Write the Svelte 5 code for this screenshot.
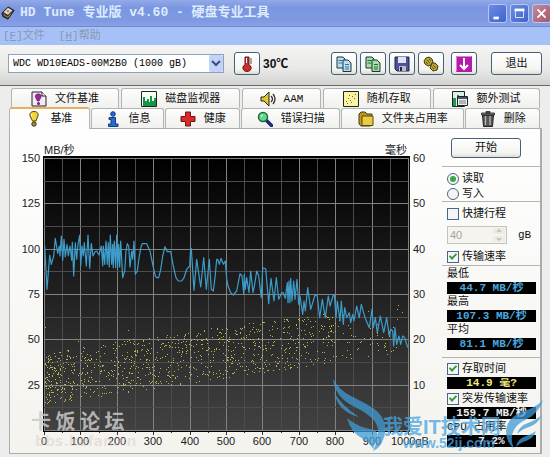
<script>
  const topTabs = [
    { icon: 'filebench', label: '文件基准' },
    { icon: 'monitor', label: '磁盘监视器' },
    { icon: 'speaker', label: 'AAM' },
    { icon: 'random', label: '随机存取' },
    { icon: 'extra', label: '额外测试' },
  ];
  const bottomTabs = [
    { icon: 'bulb', label: '基准' },
    { icon: 'info', label: '信息' },
    { icon: 'health', label: '健康' },
    { icon: 'scan', label: '错误扫描' },
    { icon: 'folder', label: '文件夹占用率' },
    { icon: 'trash', label: '删除' },
  ];
  const tools = [
    { icon: 'copy', label: '复制信息' },
    { icon: 'copygreen', label: '复制截图' },
    { icon: 'save', label: '保存' },
    { icon: 'options', label: '选项' },
    { icon: 'down', label: '最小化' },
  ];

  let active = $state('基准');
  let mode = $state('read');
  let shortStroke = $state(false);
  let showRate = $state(true);
  let showAccess = $state(true);
  let showBurst = $state(true);

  // plot area
  const left = 44;
  const top = 157;
  const stepX = 36.4;
  const stepY = 45.3;
  const bottom = top + stepY * 6;
  const right = left + stepX * 10;
  const columns = Array.from({ length: 21 }, (_, i) => Math.round(left + (i * stepX) / 2));
  const rows = Array.from({ length: 13 }, (_, i) => Math.round(top + (i * stepY) / 2));

  // transfer rate, x/y pairs in thirds of a unit
  const firstHalf = [
    134,345,141,475,149,372,154,400,161,375,166,322,173,367,178,345,180,375,184,315,188,388,192,325,
    196,378,201,340,205,375,210,345,215,388,217,333,221,435,226,335,230,385,234,340,239,312,242,405,
    246,345,250,375,253,335,259,405,264,312,269,412,274,337,279,375,285,362,290,360,297,372,304,345,
    308,405,310,345,314,400,318,330,322,400,325,335,328,408,331,312,335,400,338,340,340,410,343,330,
    347,410,350,312,353,410,356,340,359,408,362,330,368,440,374,420,378,360,382,338,386,345,390,408,
    395,360,398,385,402,330,406,430,412,420,418,375,423,348,427,338,440,338,450,360,458,400,466,435,
    470,440,476,440,482,415,488,375,495,347,502,362,512,362,520,405,528,440,535,450,545,450,552,440,
    560,415,569,405,571,365,574,352,582,478,590,385,602,468,611,380,619,475,628,385,634,475,640,480,
    645,440,650,385,
  ];
  const secondHalf = [
    53,115,58,130,63,112,70,130,76,120,80,175,84,195,
    92,215,100,222,110,210,120,158,126,165,131,218,133,160,136,205,140,170,147,215,152,150,159,215,
    164,190,170,150,176,165,184,230,188,140,197,143,206,248,213,172,222,240,229,170,236,235,245,215,
    250,215,256,232,262,185,264,245,267,180,270,245,272,172,276,240,281,180,285,235,291,175,296,250,
    300,225,308,280,312,240,316,270,323,200,332,265,345,222,352,225,359,290,367,235,376,290,385,225,
    390,255,400,222,403,220,408,290,412,240,416,270,420,300,424,240,430,310,434,260,440,290,448,275,
    452,305,458,280,462,300,470,255,478,290,484,250,495,290,508,320,516,265,520,320,526,290,532,335,
    541,285,551,335,560,290,568,345,572,325,578,330,581,375,585,320,590,370,597,345,602,370,608,345,
    614,350,623,380,
  ];

  function toPoints(list, dx, dy) {
    const out = [];
    for (let i = 0; i < list.length; i += 2) {
      out.push((dx + list[i] / 3).toFixed(1) + ',' + (dy + list[i + 1] / 3).toFixed(1));
    }
    return out.join(' ');
  }
  const ratePoints = toPoints(firstHalf, 0, 130) + ' ' + toPoints(secondHalf, 200, 220);

  // access time dots, fixed seed so the plot is stable
  let seed = 20;
  function rand() {
    seed = (seed * 16807) % 2147483647;
    return seed / 2147483647;
  }
  const dots = [];
  for (let i = 0; i < 1150; i++) {
    const t = Math.pow(rand(), 1.3);
    if (t > 0.82 && rand() > 0.3) continue;
    const hi = 354 - 50 * Math.pow(t, 0.8);
    const lo = 403 - 52 * t;
    let y = hi + (lo - hi) * rand();
    dots.push([Math.round(45 + t * 360), Math.round(y)]);
  }
  dots.push([45, 326], [128, 329], [398, 304], [397, 318], [372, 310], [78, 340]);
  const dotPath = dots.map(([x, y]) => `M${x} ${y}h1v1h-1z`).join('');
</script>

{#snippet icon(name)}
  <svg class="icon" viewBox="0 0 16 16" aria-hidden="true">
    {#if name === 'filebench'}
      <path d="M1 1h10l4 4v10H1z" fill="#f6e8f6" stroke="#222" />
      <path d="M11 1v4h4" fill="#fff" stroke="#222" />
      <path d="M7 3c3 0 4 2 2.500 4L8 10H6.500L5 7C3.500 5 5 3 7 3z" fill="#a426a4" stroke="#401040" stroke-width=".7" />
      <circle cx="7.500" cy="12.500" r="1.500" fill="#702070" />
    {:else if name === 'monitor'}
      <path d="M.5 .5h15v15H.5z" fill="#f4fff2" stroke="#222" />
      <path d="M2 15V6h2v4h2V8h2v3h1V5h2v5h2V7h2v8z" fill="#169447" />
    {:else if name === 'speaker'}
      <path d="M1 6h3l5-5v14l-5-5H1z" fill="#e2c72b" stroke="#222" />
      <path d="M11 5q3 3 0 6M13 3q4 5 0 10" fill="none" stroke="#333" stroke-width="1.300" />
    {:else if name === 'random'}
      <path d="M.5 .5h15v15H.5z" fill="#fbf3a4" stroke="#222" />
      <path d="M3 10h1v1H3zM5 7h1v1H5zM7 9h1v1H7zM9 5h1v1H9zM11 7h1v1h-1zM12 3h1v1h-1zM4 12h1v1H4zM8 11h1v1H8zM6 4h1v1H6z" fill="#75602b" />
    {:else if name === 'extra'}
      <path d="M.5 .5h12v15H.5z" fill="#dceee5" stroke="#222" />
      <path d="M1 15V7h3v8zM5 15V4h2v11z" fill="#1b9a54" />
      <path d="M5.500 5.500h10v9h-10z" fill="#eee" stroke="#222" />
      <path d="M6 6h9v2H6z" fill="#456" />
      <path d="M7 10h7M7 12h7" stroke="#777" />
    {:else if name === 'bulb'}
      <path d="M8 .5c4 0 5 3 3.500 5.500L10 10H6.500L4.500 6C3 3 4.500.5 8 .5z" fill="#f1d735" stroke="#4a4210" />
      <path d="M6 2.500q-1 1 0 3" fill="none" stroke="#fff" />
      <circle cx="8" cy="13" r="2.200" fill="#a69422" stroke="#332" />
    {:else if name === 'info'}
      <circle cx="8" cy="3" r="2.300" fill="#276ad0" stroke="#123d82" />
      <path d="M4 6.500h6.500V13H13v2.500H3.500V13H6V8.500H4z" fill="#276ad0" stroke="#123d82" />
    {:else if name === 'health'}
      <path d="M5.500 1h5v4.500H15v5h-4.500V15h-5v-4.500H1v-5h4.500z" fill="#db2929" stroke="#701616" />
    {:else if name === 'scan'}
      <path d="M9 9l5.500 5.500" stroke="#202b70" stroke-width="3.500" stroke-linecap="round" />
      <circle cx="6" cy="6" r="4.500" fill="#64d78a" stroke="#1b6c3e" stroke-width="1.500" />
      <path d="M4 6q0-2 2-2" fill="none" stroke="#e9fff0" />
    {:else if name === 'folder'}
      <path d="M1 3l2-2h4l2 2h5v11l-2 1H3l-2-2z" fill="#bd981f" stroke="#4b3c10" />
      <path d="M4 5h11v9.500H4z" fill="#eccb42" stroke="#5a4913" />
    {:else if name === 'trash'}
      <path d="M2.500 4h11l-1 11.500h-9z" fill="#555" stroke="#222" />
      <path d="M1.500 2h13v2h-13zM6 .5h4V2H6z" fill="#777" stroke="#222" stroke-width=".8" />
      <path d="M5.500 5v9M10 5v9" stroke="#b9b9b9" stroke-width="1.300" />
    {:else if name === 'copy' || name === 'copygreen'}
      <g fill={name === 'copy' ? '#b9def0' : '#a8dda5'} stroke="#1d3340">
        <path d="M1 1h6l2 2v9H1z" />
        <path d="M7 4h5l3 3v8.500H7z" />
      </g>
      <path d="M2.500 4.500h4M2.500 7h4M9 8.500h4M9 11h4M9 13h4" stroke={name === 'copy' ? '#3377a0' : '#187332'} />
    {:else if name === 'save'}
      <path d="M1 1h14v14H3l-2-2z" fill="#50509a" stroke="#1e1e4e" />
      <path d="M4 1h8v6H4z" fill="#dfe3f3" />
      <path d="M5 10h7v5H5z" fill="#bbc" />
      <path d="M6 11h2v4H6z" fill="#224" />
    {:else if name === 'options'}
      <g fill="#b5a23a" stroke="#45390d">
        <path d="M3 2l3-1 3 2 1 3-2 3-3 1-3-2-1-3z" />
        <path d="M9 7l3 0 3 3-1 4-4 1-3-3z" />
      </g>
      <path d="M4 4l3 3M3 6l2 2M6 3l2 2M10 9l3 3M9 11l2 2" stroke="#6d5d18" />
    {:else if name === 'down'}
      <path d="M0 0h16v16H0z" fill="#b51cab" />
      <path d="M.5 15.500V.5h15" fill="none" stroke="#e77be0" />
      <path d="M8 2v11M4 9l4 4 4-4" fill="none" stroke="#fff" stroke-width="2" />
    {:else if name === 'temp'}
      <path d="M6 1h4v8q3 1 2 4-1 2.500-4 2.500T4 13q-1-3 2-4z" fill="#d22b2b" stroke="#5c1a1a" />
      <path d="M7 2h1v5H7z" fill="#fff" />
      <path d="M11 3h2M11 5h2M11 7h2" stroke="#555" />
    {:else if name === 'disk'}
      <path d="M1 8l7-7 7 4-7 10-6-3z" fill="#3a3632" stroke="#1d1b1a" />
      <path d="M3 7l5-5 5 3-5 5z" fill="#e4dccb" />
      <circle cx="8" cy="6" r="1.500" fill="#a88b5a" />
      <path d="M3 10l5 3 3-4" fill="none" stroke="#c88c3c" />
    {/if}
  </svg>
{/snippet}

<div class="window">
  <header class="titlebar">
    {@render icon('disk')}
    <h1>HD Tune 专业版 v4.60 - 硬盘专业工具</h1>
    <div class="controls">
      <button aria-label="最小化"><svg viewBox="0 0 19 19"><path d="M5 13h6v3H5z" fill="#fff" /></svg></button>
      <button aria-label="最大化"><svg viewBox="0 0 19 19"><path d="M5 5h9v9H5z" fill="none" stroke="#e8efff" /><path d="M4 4h11v3H4z" fill="#fff" /></svg></button>
      <button class="close" aria-label="关闭"><svg viewBox="0 0 19 19"><path d="M5 5l9 9M14 5l-9 9" stroke="#fff" stroke-width="2" /></svg></button>
    </div>
  </header>

  <nav class="menu">
    <button>[<u>F</u>]文件</button>
    <button>[<u>H</u>]帮助</button>
  </nav>

  <div class="toolbar">
    <div class="drive">
      <select aria-label="硬盘">
        <option>WDC WD10EADS-00M2B0 (1000 gB)</option>
      </select>
      <span class="arrow"><svg viewBox="0 0 14 16"><path d="M3 6l4 4 4-4" fill="none" stroke="#34507f" stroke-width="2" /></svg></span>
    </div>
    <button class="btn tool" aria-label="温度">{@render icon('temp')}</button>
    <span class="temp">30℃</span>
    <div class="tools">
      {#each tools as tool}
        <button class="btn tool" aria-label={tool.label}>{@render icon(tool.icon)}</button>
      {/each}
    </div>
    <button class="btn exit">退出</button>
  </div>

  <main>
    <div class="tabs top">
      {#each topTabs as tab}
        <button class:active={active === tab.label} onclick={() => (active = tab.label)}>{@render icon(tab.icon)}{tab.label}</button>
      {/each}
    </div>
    <div class="tabs second">
      {#each bottomTabs as tab}
        <button class:active={active === tab.label} onclick={() => (active = tab.label)}>{@render icon(tab.icon)}{tab.label}</button>
      {/each}
    </div>

    <div class="panel">
      <svg class="chart" viewBox="10 128 432 324" role="img" aria-label="基准">
        <defs>
          <linearGradient id="plot" x1="0" y1="0" x2="0" y2="1">
            <stop offset="0" stop-color="#000" />
            <stop offset="1" stop-color="#424242" />
          </linearGradient>
        </defs>
        <rect x="43" y="155" width="367" height="276" fill="url(#plot)" />
        <g shape-rendering="crispEdges">
          {#each columns as x, i}
            <path d="M{x + 0.5} {top}V{bottom}" stroke={i % 2 ? '#4c4c4c' : '#828282'} />
            <path d="M{x + 0.5} 431v{i % 2 ? 1 : 3}" stroke="#333" />
          {/each}
          {#each rows as y, i}
            <path d="M{left} {y + 0.5}H{right}" stroke={i % 2 ? '#4c4c4c' : '#828282'} />
          {/each}
          <path d="M43 155.500H410M43 430.500H410M43.500 155V431" stroke="#000" />
        </g>
        {#if showAccess}
          <path d={dotPath} fill="#d6ca54" opacity=".85" shape-rendering="crispEdges" />
        {/if}
        {#if showRate}
          <polyline points={ratePoints} fill="none" stroke="#3d9cc9" stroke-width="1.200" stroke-linejoin="round" />
        {/if}
        <g class="axis">
          <text x="44" y="153">MB/秒</text>
          <text x="407" y="153" text-anchor="end">毫秒</text>
          {#each [150, 125, 100, 75, 50, 25] as value, i}
            <text x="40" y={Math.round(top + i * stepY) + 4} text-anchor="end">{value}</text>
          {/each}
          {#each [60, 50, 40, 30, 20, 10] as value, i}
            <text x="413" y={Math.round(top + i * stepY) + 4}>{value}</text>
          {/each}
          {#each [0, 100, 200, 300, 400, 500, 600, 700, 800, 900] as value, i}
            <text x={Math.round(left + i * stepX)} y="444" text-anchor="middle">{value}</text>
          {/each}
          <text x="391" y="444">1000gB</text>
        </g>
        <g class="forum">
          <text class="name" x="31" y="428">卡 饭 论 坛</text>
          <text class="site" x="35" y="445">bbs.kafan.cn</text>
        </g>
      </svg>

      <aside>
        <section class="run">
          <button class="btn start">开始</button>
        </section>
        <section class="modes">
          <label><input type="radio" value="read" bind:group={mode} />读取</label>
          <label><input type="radio" value="write" bind:group={mode} />写入</label>
        </section>
        <section class="stroke">
          <label><input type="checkbox" bind:checked={shortStroke} />快捷行程</label>
          <div class="size">
            <div class="spin">
              <input id="size" type="number" value="40" disabled={!shortStroke} />
              <svg viewBox="0 0 12 14" aria-hidden="true"><path d="M0 0h12v6H0zM0 8h12v6H0z" fill="#ecebe6" /><path d="M4 4l2-2 2 2M4 10l2 2 2-2" fill="none" stroke="#c0beb4" stroke-width="1.500" /></svg>
            </div>
            <label for="size">gB</label>
          </div>
          <label><input type="checkbox" bind:checked={showRate} />传输速率</label>
        </section>
        <section class="rates">
          <p>最低</p>
          <output>44.7 MB/秒</output>
          <p>最高</p>
          <output>107.3 MB/秒</output>
          <p>平均</p>
          <output>81.1 MB/秒</output>
        </section>
        <section class="access">
          <label><input type="checkbox" bind:checked={showAccess} />存取时间</label>
          <output class="yellow">14.9 毫?</output>
          <label class="burst"><input type="checkbox" bind:checked={showBurst} />突发传输速率</label>
          <output class="white">159.7 MB/秒</output>
          <p>CPU 占用率</p>
          <output class="white">7.2%</output>
        </section>
      </aside>
    </div>
  </main>

  <svg class="brand" viewBox="330 370 220 87" aria-hidden="true">
    <g fill="#3f9bd6">
      <path d="M333 379q6 11 18 17 14 7 22 12 10 7 12 17 1 9-2 15-3 8-10 11 6-13 5-22-2-9-10-14-5-4-15-9-18-9-20-27z" />
      <path d="M334 392q7 13 25 25-21-5-25-25z" />
      <path d="M347 418q10 9 27 12 3 1 4 5-3 8-5 14-4-7-10-10-12-6-16-21z" />
      <path d="M543 400q-8 8-19 11-17 6-18 20 0 11 8 18-4-10-1-17 3-8 14-13 12-6 16-19z" />
      <path d="M541 416q-5 4-13 7-9 3-11 11 5-5 12-7 9-3 12-11z" />
      <path d="M536 431q-4 3-10 5-9 3-10 11 5-5 10-6 8-3 10-10z" />
    </g>
    <text class="big" x="383" y="434">我爱IT技术网</text>
    <text class="url" x="403" y="448">www.52ij.com</text>
  </svg>
</div>

<style>
  :global(body) {
    margin: 0;
    background: #eeeeec;
  }

  .window {
    position: relative;
    overflow: hidden;
    background: #ededec;
    color: #111;
    font: 11px/14px "Liberation Mono", "Noto Sans CJK SC", monospace;
    padding-bottom: 3px;
  }

  button, input, select {
    font: inherit;
    color: inherit;
    margin: 0;
    padding: 0;
    box-sizing: border-box;
  }

  svg {
    display: block;
  }

  .icon {
    width: 16px;
    height: 16px;
    flex: none;
  }

  .titlebar {
    display: flex;
    align-items: center;
    height: 27px;
    box-sizing: border-box;
    border-bottom: 1px solid #7088cc;
    background: linear-gradient(#93aae8, #7b96e0 30%, #7f9ae3 80%, #8aa2e4);
  }

  .titlebar .icon {
    width: 14px;
    height: 14px;
    margin: 0 5px 0 1px;
  }

  h1 {
    margin: 0;
    flex: 1;
    white-space: nowrap;
    color: #dcecff;
    font-size: 13px;
    line-height: 20px;
  }

  .controls {
    display: flex;
    gap: 3px;
    margin-right: -1px;
  }

  .controls button {
    width: 19px;
    height: 19px;
    border: 1px solid #b7c8f4;
    border-radius: 3px;
    background: linear-gradient(135deg, #6c8ce4, #3f63c9);
  }

  .controls .close {
    background: linear-gradient(135deg, #c08a9e, #a9586a);
  }

  .menu {
    display: flex;
    gap: 14px;
    height: 18px;
    padding-left: 3px;
    background: #a6c1f8;
  }

  .menu button {
    border: 0;
    background: none;
    color: #8b97b3;
  }

  .toolbar {
    display: flex;
    align-items: center;
    height: 41px;
    box-sizing: border-box;
    padding: 0 8px 3px;
    border-bottom: 1px solid #6a6a6a;
    background: linear-gradient(#f4f4f3, #e9e9e8 60%, #d2d2d0);
  }

  .drive {
    position: relative;
    flex: 0 1 216px;
    margin-right: 10px;
  }

  select {
    appearance: none;
    display: block;
    width: 100%;
    height: 19px;
    padding-left: 4px;
    border: 1px solid #8ea3bd;
    border-radius: 0;
    background: #fff;
    font-size: 10px;
    color: #000;
  }

  .arrow {
    position: absolute;
    right: 1px;
    top: 1px;
    width: 14px;
    height: 17px;
    border-radius: 2px;
    background: #c3d3f8;
    pointer-events: none;
  }

  .btn {
    display: flex;
    align-items: center;
    justify-content: center;
    border: 1px solid #44617c;
    border-radius: 3px;
    background: linear-gradient(#fff, #f3f3ef 80%, #dedcd3);
  }

  .tool {
    width: 26px;
    height: 23px;
  }

  .temp {
    margin-left: 3px;
    font-family: "Liberation Sans", "Noto Sans CJK SC", sans-serif;
    font-size: 12px;
    font-weight: bold;
  }

  .tools {
    display: flex;
    gap: 3px;
    margin-left: auto;
  }

  .tools .tool:last-child {
    margin-left: 4px;
  }

  .exit {
    width: 51px;
    height: 23px;
    margin-left: 14px;
  }

  main {
    padding: 2px 8px 0 9px;
  }

  .tabs {
    display: grid;
    gap: 2px;
  }

  .top {
    grid-template-columns: 108fr 119fr 78fr 108fr 107fr;
    padding: 0 2px;
  }

  .second {
    grid-template-columns: 80fr 73fr 74fr 98fr 122fr 74fr;
    gap: 1px;
    padding-right: 2px;
  }

  .tabs button {
    display: flex;
    align-items: center;
    justify-content: center;
    gap: 8px;
    height: 20px;
    border: 1px solid #b0b5b8;
    border-bottom: 0;
    border-radius: 3px 3px 0 0;
    background: linear-gradient(#fdfdfc, #f0f0ed);
    white-space: nowrap;
  }

  .tabs .active {
    border-top: 2px solid #e5b062;
    background: #fdfdfd;
    height: 22px;
    margin: -1px 0 -1px;
    position: relative;
  }

  .panel {
    display: grid;
    grid-template-columns: minmax(0, 432fr) minmax(98px, 98fr);
    border: 1px solid #a9adb0;
    border-right-width: 2px;
    background: linear-gradient(#fefefe, #f4f3ee);
  }

  .chart {
    width: 100%;
  }

  .axis {
    font: 11px "Liberation Sans", "Noto Sans CJK SC", sans-serif;
    fill: #222;
  }

  .forum .name {
    font: bold 20px "Noto Sans CJK SC", sans-serif;
    fill: #c9c9c9;
    fill-opacity: .85;
  }

  .forum .site {
    font: bold 14px "DejaVu Sans", sans-serif;
    fill: #d9c9c9;
    fill-opacity: .45;
  }

  section {
    display: flex;
    flex-direction: column;
    border-bottom: 1px solid #b5b5b0;
    padding-left: 5px;
    padding-right: 4px;
  }

  .run {
    padding-top: 9px;
    padding-bottom: 8px;
    padding-left: 9px;
  }

  .start {
    width: 70px;
    height: 20px;
  }

  label {
    display: flex;
    align-items: center;
    gap: 3px;
    height: 16px;
    white-space: nowrap;
  }

  .modes {
    padding-top: 4px;
  }

  .modes label {
    height: 15px;
  }

  input[type='checkbox'],
  input[type='radio'] {
    appearance: none;
    width: 12px;
    height: 12px;
    border: 1px solid #48658a;
    background: #f4f5f4;
    display: grid;
    place-items: center;
  }

  input[type='radio'] {
    border-radius: 50%;
  }

  input[type='radio']:checked::after {
    content: '';
    width: 6px;
    height: 6px;
    border-radius: 50%;
    background: #3da64b;
  }

  input[type='checkbox']:checked::after {
    content: '';
    width: 6px;
    height: 3px;
    margin-bottom: 3px;
    border: solid #2d9a3d;
    border-width: 0 0 2px 2px;
    box-sizing: content-box;
    transform: rotate(-45deg) scale(.9);
  }

  .stroke {
    padding-top: 4px;
  }

  .size {
    display: flex;
    align-items: center;
    gap: 11px;
    margin: 4px 0 5px;
  }

  .spin {
    position: relative;
  }

  .spin input {
    display: block;
    appearance: textfield;
    width: 60px;
    height: 18px;
    padding-left: 2px;
    border: 1px solid #c4c3bb;
    border-radius: 0;
    background: #f5f4ef;
    color: #a5a49b;
    font-family: "Liberation Sans", sans-serif;
  }

  .spin input::-webkit-inner-spin-button {
    display: none;
  }

  .spin svg {
    position: absolute;
    right: 2px;
    top: 2px;
    width: 12px;
    height: 14px;
    pointer-events: none;
  }

  p {
    margin: 0;
    line-height: 16px;
  }

  output {
    height: 12px;
    overflow: hidden;
    background: #000;
    color: #48a9df;
    font-weight: bold;
    line-height: 12px;
    text-align: center;
  }

  .rates {
    padding-bottom: 7px;
  }

  .access {
    padding-top: 3px;
    padding-bottom: 5px;
    border: 0;
  }

  .burst {
    margin-top: 2px;
  }

  .yellow {
    color: #f0ea7c;
  }

  .white {
    color: #eee;
  }

  .brand {
    position: absolute;
    right: 0;
    bottom: 0;
    width: 220px;
    height: 87px;
    opacity: .75;
    pointer-events: none;
  }

  .brand text {
    fill: #4aa5e0;
  }

  .brand .big {
    font: bold 20px "Liberation Sans", "Noto Sans CJK SC", sans-serif;
  }

  .brand .url {
    font: bold 14px "Liberation Sans", sans-serif;
  }
</style>
